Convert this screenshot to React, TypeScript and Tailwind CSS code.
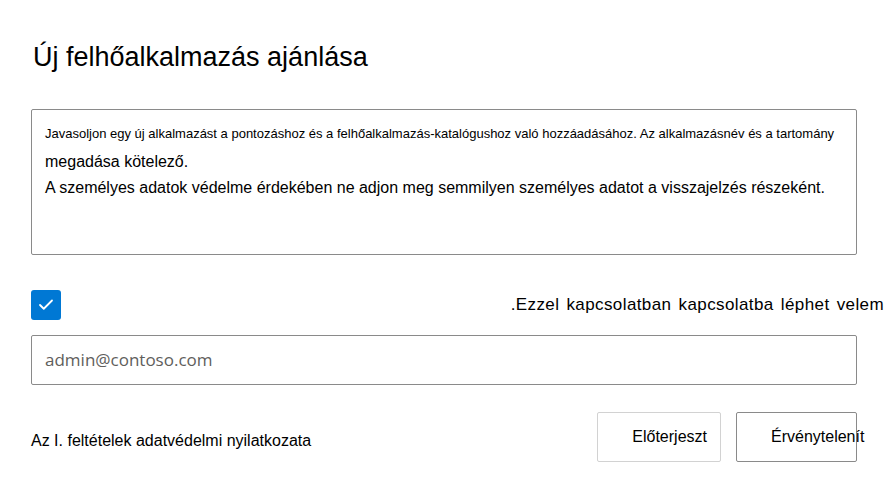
import { Check } from "lucide-react";

export default function App() {
  return (
    <div className="w-[885px] h-[491px] overflow-hidden bg-white text-[#1b1b1b] font-['Liberation_Sans',Arial,sans-serif]">
      {/* Title */}
      <h1 className="pt-[41px] pl-[33px] text-[27px] leading-[32px] font-normal text-black">
        Új felhőalkalmazás ajánlása
      </h1>

      {/* Description box */}
      <div className="ml-[31px] mt-[36px] w-[826px] h-[146px] rounded-[2px] border border-[#8a8a8a] px-[13px] pt-[15px]">
        <p className="text-[13px] leading-[18px] text-black">
          Javasoljon egy új alkalmazást a pontozáshoz és a felhőalkalmazás-katalógushoz való hozzáadásához. Az alkalmazásnév és a tartomány
        </p>
        <p className="mt-[6px] text-[16px] leading-[26px] text-black">
          megadása kötelező.
          <br />
          A személyes adatok védelme érdekében ne adjon meg semmilyen személyes adatot a visszajelzés részeként.
        </p>
      </div>

      {/* Contact checkbox */}
      <div className="mt-[35px] ml-[31px] flex items-center justify-between">
        <div className="flex h-[30px] w-[30px] items-center justify-center rounded-[3px] bg-[#0078d4]">
          <Check className="h-[18px] w-[18px] text-white" strokeWidth={2.4} />
        </div>
        <span className="pr-[1px] text-[17px] tracking-[0.4px] [word-spacing:2px] text-black">
          .Ezzel kapcsolatban kapcsolatba léphet velem
        </span>
      </div>

      {/* Email input */}
      <div className="ml-[31px] mt-[15px] flex h-[50px] w-[826px] items-center rounded-[2px] border border-[#8a8a8a] px-[13px]">
        <span className="text-[17px] text-[#605e5c] font-['Open_Sans','Noto_Sans',sans-serif]">
          admin@contoso.com
        </span>
      </div>

      {/* Footer */}
      <div className="ml-[31px] mt-[27px] flex w-[826px] items-center justify-between">
        <span className="pt-[8px] text-[16px] text-black">Az I. feltételek adatvédelmi nyilatkozata</span>
        <div className="flex gap-[15px]">
          <button className="flex h-[50px] w-[124px] items-center justify-end rounded-[2px] border border-[#d2d2d2] bg-white pr-[13px] text-[16px] text-black">
            Előterjeszt
          </button>
          <button className="flex h-[50px] w-[121px] items-center rounded-[2px] border border-[#8a8a8a] bg-white pl-[34px] text-[16px] whitespace-nowrap text-black">
            Érvénytelenít
          </button>
        </div>
      </div>
    </div>
  );
}
